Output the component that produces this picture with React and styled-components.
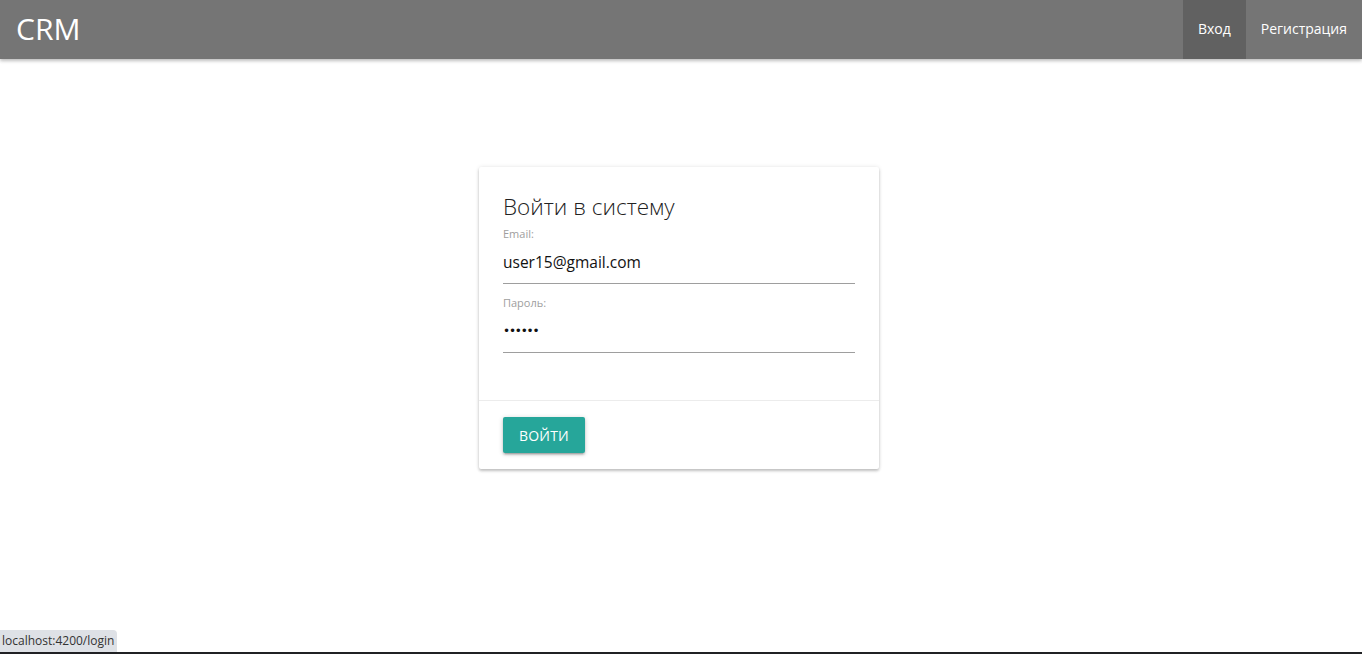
import React, { useState } from "react";
import styled, { createGlobalStyle } from "styled-components";

const GlobalStyle = createGlobalStyle`
  html, body {
    margin: 0;
    padding: 0;
    background: #fff;
    font-family: "Open Sans", "Noto Sans", sans-serif;
  }
  * { box-sizing: border-box; }
`;

const Nav = styled.nav`
  height: 59px;
  background: #757575;
  display: flex;
  align-items: stretch;
  justify-content: space-between;
  box-shadow: 0 2px 3px rgba(0, 0, 0, 0.18), 0 1px 5px rgba(0, 0, 0, 0.12);
  color: #fff;
`;

const Logo = styled.a`
  font-size: 30px;
  line-height: 57px;
  padding-left: 16px;
  color: #fff;
  text-decoration: none;
`;

const Menu = styled.ul`
  display: flex;
  margin: 0;
  padding: 0;
  list-style: none;
`;

const MenuItem = styled.li`
  background: ${(p) => (p.$active ? "#616161" : "transparent")};
  padding: 0 15px;
  font-size: 14px;
  line-height: 57px;
  cursor: pointer;
`;

const Main = styled.main`
  display: flex;
  justify-content: center;
  padding: 108px 4px 40px 0;
`;

const Card = styled.form`
  width: 400px;
  background: #fff;
  border-radius: 2px;
  box-shadow: 0 2px 3px 0 rgba(0, 0, 0, 0.22), 0 0 4px 0 rgba(0, 0, 0, 0.1);
`;

const CardContent = styled.div`
  padding: 24px 24px 47px;
`;

const Title = styled.h2`
  margin: 0 0 4px;
  font-size: 22.5px;
  font-weight: 300;
  line-height: 32px;
  color: #222;
`;

const Field = styled.div`
  display: flex;
  flex-direction: column;
  & + & {
    margin-top: 12px;
  }
`;

const Label = styled.label`
  font-size: 11px;
  line-height: 14px;
  color: #9e9e9e;
`;

const Input = styled.input`
  height: 43px;
  border: none;
  border-bottom: 1px solid #9e9e9e;
  outline: none;
  padding: 0;
  font-family: ${(p) => (p.type === "password" ? '"DejaVu Sans", sans-serif' : "inherit")};
  font-size: ${(p) => (p.type === "password" ? "12px" : "15.5px")};
  letter-spacing: ${(p) => (p.type === "password" ? "-1.2px" : "0")};
  color: #111;
  background: transparent;
`;

const CardAction = styled.div`
  padding: 16px 24px;
  border-top: 1px solid rgba(160, 160, 160, 0.2);
`;

const Button = styled.button`
  height: 36px;
  padding: 0 16px;
  border: none;
  border-radius: 2px;
  background: #26a69a;
  color: #fff;
  font-family: inherit;
  font-size: 14px;
  letter-spacing: 0.2px;
  text-transform: uppercase;
  cursor: pointer;
  box-shadow: 0 2px 2px 0 rgba(0, 0, 0, 0.14), 0 3px 1px -2px rgba(0, 0, 0, 0.12),
    0 1px 5px 0 rgba(0, 0, 0, 0.2);
`;

const StatusBubble = styled.div`
  position: fixed;
  left: 0;
  bottom: 2px;
  height: 22px;
  padding: 0 3px 0 2px;
  background: #dee1e6;
  border-top-right-radius: 4px;
  font-size: 12px;
  line-height: 22px;
  color: #333;
`;

const WindowEdge = styled.div`
  position: fixed;
  left: 0;
  right: 0;
  bottom: 0;
  height: 2px;
  background: #202124;
`;

export default function App() {
  const [email, setEmail] = useState("user15@gmail.com");
  const [password, setPassword] = useState("123456");

  return (
    <>
      <GlobalStyle />
      <Nav>
        <Logo href="#">CRM</Logo>
        <Menu>
          <MenuItem $active>Вход</MenuItem>
          <MenuItem>Регистрация</MenuItem>
        </Menu>
      </Nav>
      <Main>
        <Card onSubmit={(e) => e.preventDefault()}>
          <CardContent>
            <Title>Войти в систему</Title>
            <Field>
              <Label htmlFor="email">Email:</Label>
              <Input
                id="email"
                type="email"
                value={email}
                onChange={(e) => setEmail(e.target.value)}
              />
            </Field>
            <Field>
              <Label htmlFor="password">Пароль:</Label>
              <Input
                id="password"
                type="password"
                value={password}
                onChange={(e) => setPassword(e.target.value)}
              />
            </Field>
          </CardContent>
          <CardAction>
            <Button type="submit">Войти</Button>
          </CardAction>
        </Card>
      </Main>
      <StatusBubble>localhost:4200/login</StatusBubble>
      <WindowEdge />
    </>
  );
}
